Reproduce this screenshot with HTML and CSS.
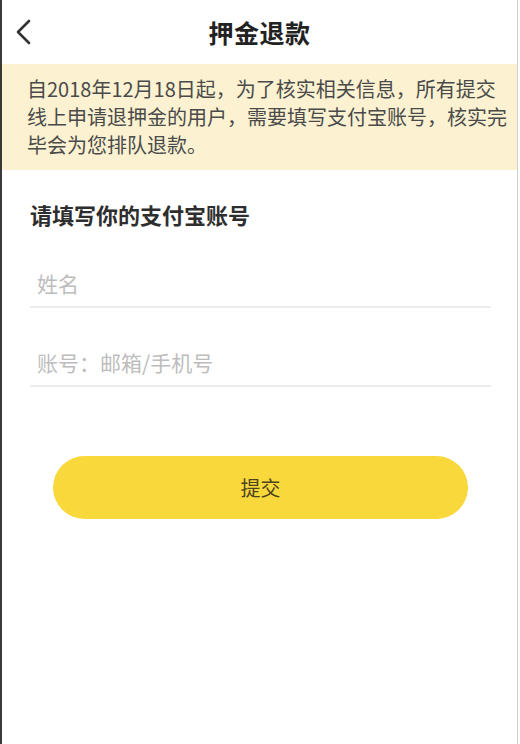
FILE: index.html
```html
<!DOCTYPE html>
<html lang="zh-CN">
<head>
    <meta charset="UTF-8">
    <meta name="viewport" content="width=device-width, initial-scale=1.0">
    <title>押金退款</title>
    <link rel="stylesheet" href="styles.css">
</head>
<body>
    <div class="page">
        <div class="header">
            <a class="back-btn" href="#">
                <svg width="20" height="28" viewBox="0 0 20 28">
                    <path d="M15 3 L4 14 L15 25" fill="none" stroke="#333" stroke-width="2.6" stroke-linecap="round" stroke-linejoin="round"/>
                </svg>
            </a>
            <h1>押金退款</h1>
        </div>

        <div class="notice">
            自2018年12月18日起，为了核实相关信息，所有提交<br>
            线上申请退押金的用户，需要填写支付宝账号，核实完<br>
            毕会为您排队退款。
        </div>

        <div class="form-section">
            <h2>请填写你的支付宝账号</h2>
            <div class="field">
                <input type="text" id="name" placeholder="姓名">
            </div>
            <div class="field">
                <input type="text" id="account" placeholder="账号：邮箱/手机号">
            </div>
            <button id="submitBtn">提交</button>
        </div>
    </div>
</body>
</html>
```

FILE: styles.css
```css
html, body {
    margin: 0;
    padding: 0;
    height: 100%;
    background-color: #fff;
}
body {
    font-family: "Noto Sans CJK SC", "Noto Sans", sans-serif;
    color: #333;
}
.page {
    width: 515px;
    min-height: 100%;
    border-left: 2px solid #3a3a3a;
    border-right: 1px solid #cfcfcf;
    box-sizing: content-box;
}
.header {
    height: 64px;
    display: flex;
    align-items: center;
    justify-content: center;
    position: relative;
}
.header h1 {
    margin: 0;
    font-size: 25px;
    font-weight: bold;
    color: #222;
    letter-spacing: 0.5px;
}
.back-btn {
    position: absolute;
    left: 12px;
    top: 18px;
    display: block;
    width: 20px;
    height: 28px;
}
.notice {
    background-color: #fcf2d1;
    padding: 11px 10px 11px 25px;
    font-size: 20px;
    line-height: 28px;
    color: #4a4a4a;
    white-space: nowrap;
}
.form-section {
    padding: 30px 26px 0 28px;
    display: flex;
    flex-direction: column;
}
.form-section h2 {
    margin: 0;
    font-size: 22px;
    line-height: 28px;
    font-weight: bold;
    color: #2e2e2e;
}
.field {
    margin-top: 31px;
    border-bottom: 2px solid #ececec;
}
.form-section h2 + .field {
    margin-top: 32px;
}
.field input {
    width: 100%;
    height: 46px;
    box-sizing: border-box;
    border: none;
    outline: none;
    padding: 0 7px;
    font-family: inherit;
    font-size: 21px;
    color: #333;
    background: transparent;
}
.field input::placeholder {
    color: #bdbdbd;
}
button {
    margin: 69px 23px 0;
    height: 63px;
    border: none;
    border-radius: 32px;
    background-color: #f8d83a;
    color: #4d4320;
    font-family: inherit;
    font-size: 20px;
    cursor: pointer;
}
```
